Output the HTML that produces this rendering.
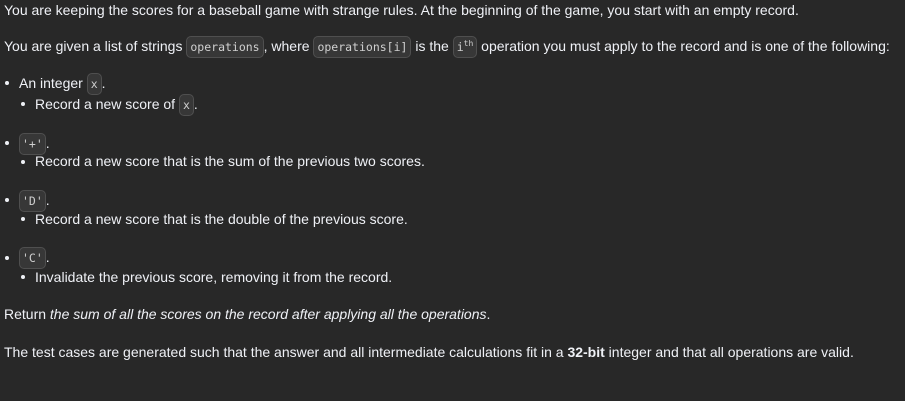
<!DOCTYPE html>
<html><head><style>
body{margin:0;background:#282828;width:905px;height:401px;overflow:hidden;font-family:"Liberation Sans",sans-serif;font-size:14px;color:#eff1f6;}
.l{position:absolute;white-space:nowrap;line-height:20px;}
code{font-family:"DejaVu Sans Mono","Liberation Mono",monospace;font-size:11.5px;color:#d0d0d0;background:#ffffff12;border:1px solid #ffffff1f;border-radius:5px;padding:3px 3px;}
.b{position:absolute;width:4px;height:4px;border-radius:50%;background:#eff1f6;}
.w{padding:3px 2px;}
</style></head><body>
<div class="l" style="left:4px;top:0">You are keeping the scores for a baseball game with strange rules. At the beginning of the game, you start with an empty record.</div>
<div class="l" style="left:4px;top:36px">You are given a list of strings <code>operations</code>, where <code>operations[i]</code> is the <code>i<sup style="font-size:8px;line-height:0">th</sup></code> operation you must apply to the record and is one of the following:</div>
<div class="b" style="left:5px;top:81px"></div>
<div class="l" style="left:19px;top:73px">An integer <code>x</code>.</div>
<div class="b" style="left:21px;top:102px"></div>
<div class="l" style="left:35px;top:94px">Record a new score of <code>x</code>.</div>
<div class="b" style="left:5px;top:141px"></div>
<div class="l" style="left:19px;top:133px"><code class="w">'+'</code>.</div>
<div class="b" style="left:21px;top:160px"></div>
<div class="l" style="left:35px;top:151px">Record a new score that is the sum of the previous two scores.</div>
<div class="b" style="left:5px;top:198px"></div>
<div class="l" style="left:19px;top:190px"><code class="w">'D'</code>.</div>
<div class="b" style="left:21px;top:217px"></div>
<div class="l" style="left:35px;top:209px">Record a new score that is the double of the previous score.</div>
<div class="b" style="left:5px;top:256px"></div>
<div class="l" style="left:19px;top:247px"><code class="w">'C'</code>.</div>
<div class="b" style="left:21px;top:275px"></div>
<div class="l" style="left:35px;top:267px">Invalidate the previous score, removing it from the record.</div>
<div class="l" style="left:4px;top:304px">Return <i>the sum of all the scores on the record after applying all the operations</i>.</div>
<div class="l" style="left:4px;top:342px">The test cases are generated such that the answer and all intermediate calculations fit in a <b>32-bit</b> integer and that all operations are valid.</div>
</body></html>
